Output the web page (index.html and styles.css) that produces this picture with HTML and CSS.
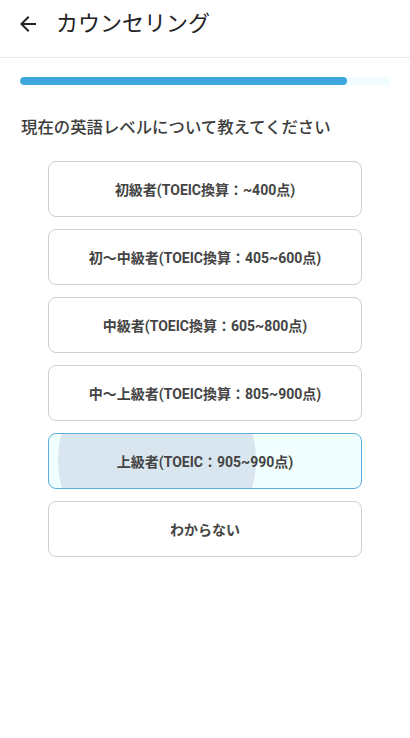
FILE: index.html
```html
<!DOCTYPE html>
<html lang="ja">
<head>
<meta charset="utf-8">
<link rel="stylesheet" href="styles.css">
</head>
<body>
<header class="header">
  <svg class="back" viewBox="0 0 24 24" width="24" height="24"><path d="M20 11H7.83l5.59-5.59L12 4l-8 8 8 8 1.41-1.41L7.83 13H20v-2z" fill="#222"/></svg>
  <h1 class="title">カウンセリング</h1>
</header>
<main class="main">
  <div class="progress"><div class="fill" style="width: 88.4%"></div></div>
  <h2 class="question">現在の英語レベルについて教えてください</h2>
  <div class="options">
    <button class="opt">初級者(TOEIC換算：~400点)</button>
    <button class="opt">初〜中級者(TOEIC換算：405~600点)</button>
    <button class="opt">中級者(TOEIC換算：605~800点)</button>
    <button class="opt">中〜上級者(TOEIC換算：805~900点)</button>
    <button class="opt selected"><span class="ripple"></span><span class="label">上級者(TOEIC：905~990点)</span></button>
    <button class="opt">わからない</button>
  </div>
</main>
</body>
</html>
```
FILE: styles.css
```css
* { box-sizing: border-box; }
html, body { margin: 0; padding: 0; background: #fff; }
body {
  width: 410px;
  font-family: Roboto, "Noto Sans CJK JP", sans-serif;
  color: #333;
}
.header {
  height: 58px;
  border-bottom: 1px solid #ececec;
  display: flex;
  align-items: center;
  padding: 0 0 10px 16px;
}
.back { flex: none; }
.title {
  margin: 0 0 0 16px;
  font-size: 22px;
  font-weight: 400;
  color: #222;
  line-height: 28px;
}
.main { padding: 19px 20px 0; }
.progress {
  height: 8px;
  border-radius: 4px;
  background: #effdff;
  overflow: hidden;
}
.fill {
  height: 100%;
  border-radius: 4px;
  background: #3ba7dd;
}
.question {
  margin: 31px 0 0 1px;
  font-size: 16.4px;
  line-height: 24px;
  font-weight: 500;
  color: #3c3c3c;
}
.options {
  display: flex;
  flex-direction: column;
  gap: 12px;
  margin-top: 21px;
  align-items: center;
}
.opt {
  position: relative;
  overflow: hidden;
  width: 314px;
  height: 56px;
  border: 1px solid #cfcfcf;
  border-radius: 8px;
  background: #fff;
  font-family: Roboto, "Noto Sans CJK JP", sans-serif;
  font-size: 14px;
  font-weight: 700;
  color: #444;
  padding: 0;
  margin: 0;
}
.selected {
  border-color: #5aaedb;
  background: #f1feff;
}
.ripple {
  position: absolute;
  left: 9px;
  top: -73px;
  width: 198px;
  height: 198px;
  border-radius: 50%;
  background: #d9e6ef;
}
.label { position: relative; }
```
